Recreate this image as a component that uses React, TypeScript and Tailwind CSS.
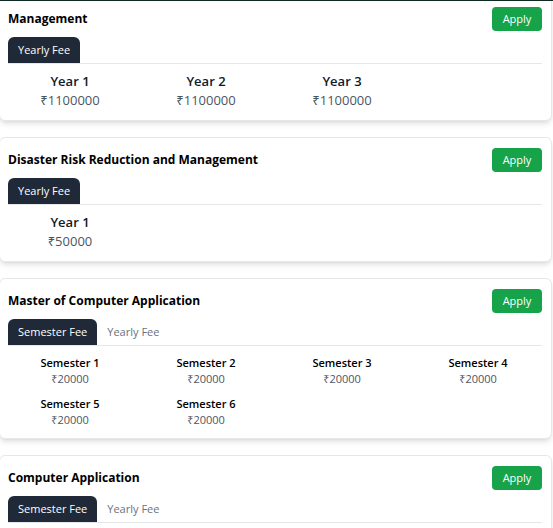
import React, { useState } from "react";

type Fee = { label: string; amount: string };

type Course = {
  name: string;
  tabs: { title: string; kind: "year" | "sem"; fees: Fee[] }[];
};

const semesters = [1, 2, 3, 4, 5, 6].map((n) => ({
  label: `Semester ${n}`,
  amount: "₹20000",
}));

const courses: Course[] = [
  {
    name: "Management",
    tabs: [
      {
        title: "Yearly Fee",
        kind: "year",
        fees: [
          { label: "Year 1", amount: "₹1100000" },
          { label: "Year 2", amount: "₹1100000" },
          { label: "Year 3", amount: "₹1100000" },
        ],
      },
    ],
  },
  {
    name: "Disaster Risk Reduction and Management",
    tabs: [
      {
        title: "Yearly Fee",
        kind: "year",
        fees: [{ label: "Year 1", amount: "₹50000" }],
      },
    ],
  },
  {
    name: "Master of Computer Application",
    tabs: [
      { title: "Semester Fee", kind: "sem", fees: semesters },
      { title: "Yearly Fee", kind: "year", fees: [] },
    ],
  },
  {
    name: "Computer Application",
    tabs: [
      { title: "Semester Fee", kind: "sem", fees: semesters },
      { title: "Yearly Fee", kind: "year", fees: [] },
    ],
  },
];

function CourseCard({ course, first }: { course: Course; first?: boolean }) {
  const [active, setActive] = useState(0);
  const tab = course.tabs[active];

  return (
    <div
      className={`-ml-px bg-white border border-gray-200 rounded-md shadow-md pl-2 pr-[9px] pt-[10px] pb-[10px] ${
        first ? "-mt-[4px]" : ""
      }`}
    >
      <div className="flex items-center justify-between">
        <h3 className="text-[12px] font-bold text-black leading-[18px]">
          {course.name}
        </h3>
        <button className="bg-[#16a34a] text-white text-[11px] rounded h-6 w-[50px]">
          Apply
        </button>
      </div>

      <div className="flex border-b border-gray-200 mt-[6px]">
        {course.tabs.map((t, i) => (
          <button
            key={t.title}
            onClick={() => setActive(i)}
            className={`h-[26px] px-[10px] text-[11px] rounded-t-md ${
              i === active ? "bg-[#1f2937] text-white" : "text-gray-500"
            }`}
          >
            {t.title}
          </button>
        ))}
      </div>

      {tab.kind === "year" ? (
        <div className="grid grid-cols-4 -ml-[6px] w-[544px] pt-2">
          {tab.fees.map((f) => (
            <div key={f.label} className="text-center">
              <div className="text-[13px] font-semibold text-gray-900 leading-[19px]">
                {f.label}
              </div>
              <div className="text-[13px] text-gray-600 leading-[19px]">
                {f.amount}
              </div>
            </div>
          ))}
        </div>
      ) : (
        <div className="grid grid-cols-4 gap-y-[9px] -ml-[6px] w-[544px] pt-[9px]">
          {tab.fees.map((f) => (
            <div key={f.label} className="text-center">
              <div className="text-[11px] font-semibold text-black leading-4">
                {f.label}
              </div>
              <div className="text-[11px] text-gray-600 leading-4">
                {f.amount}
              </div>
            </div>
          ))}
        </div>
      )}
    </div>
  );
}

export default function App() {
  return (
    <div
      className="relative h-[528px] overflow-hidden bg-white"
      style={{ fontFamily: '"Open Sans", "Noto Sans", sans-serif' }}
    >
      <div className="absolute top-0 left-0 right-0 h-px bg-[#0f2a20] z-10" />
      <div className="flex flex-col gap-[16px] pr-px">
        {courses.map((c, i) => (
          <CourseCard key={c.name} course={c} first={i === 0} />
        ))}
      </div>
    </div>
  );
}
